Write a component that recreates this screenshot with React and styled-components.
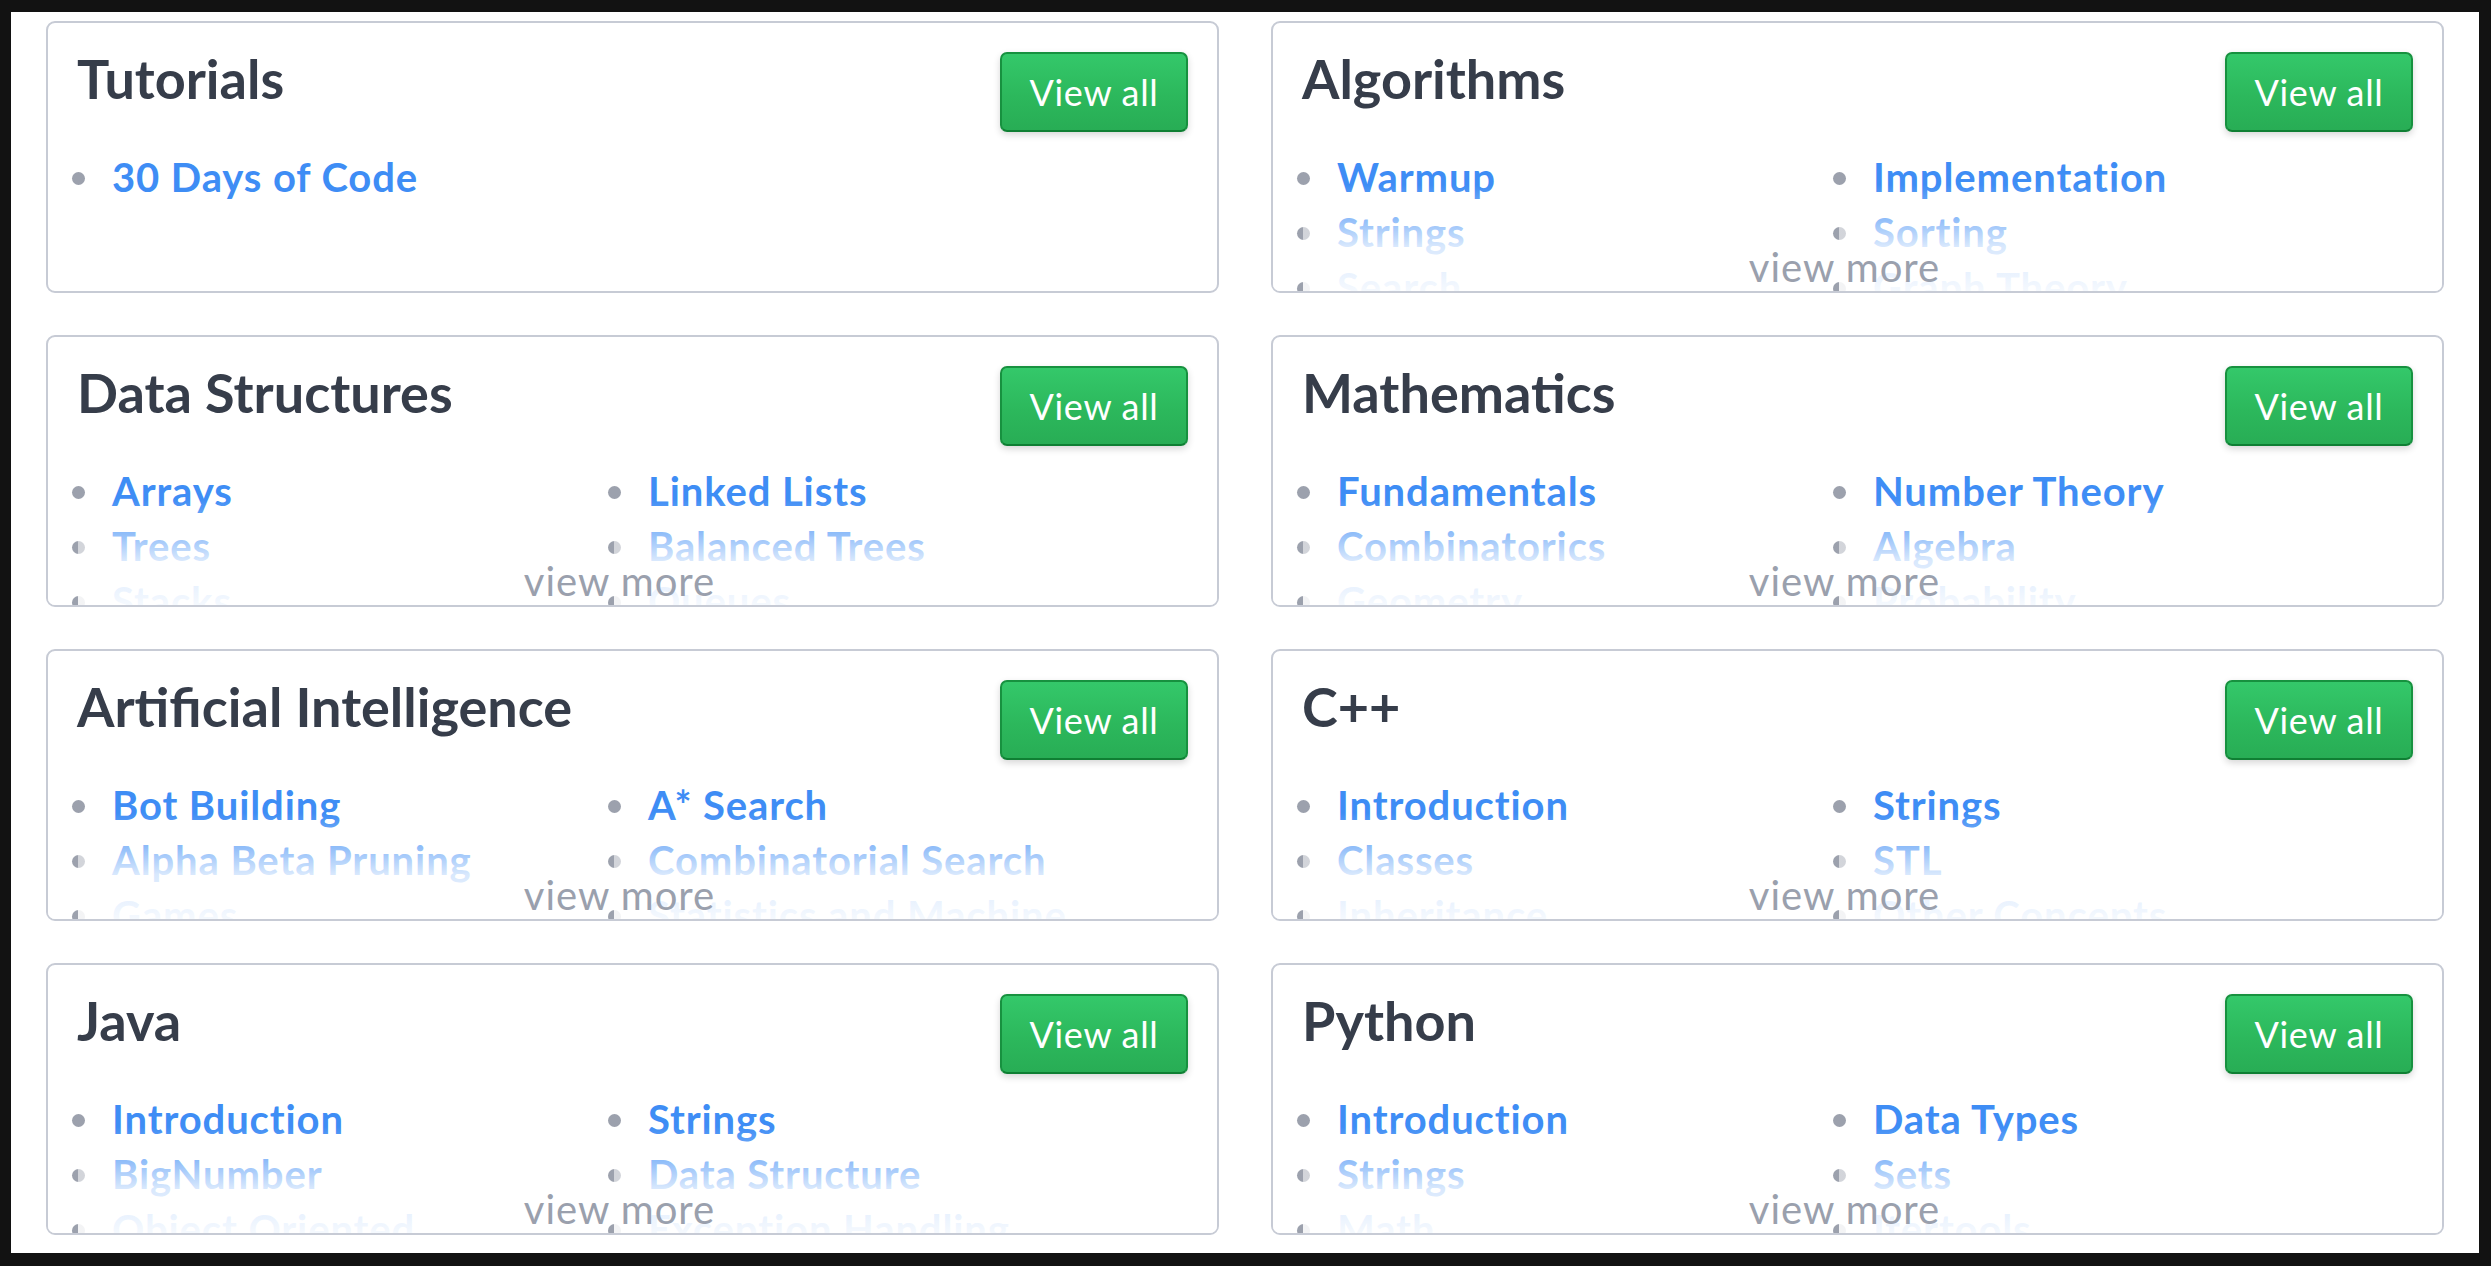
import React from "react";
import styled, { createGlobalStyle } from "styled-components";

const Global = createGlobalStyle`
  html, body { margin: 0; padding: 0; background: #121212; }
  * { box-sizing: border-box; }
  body { font-family: Lato, "Open Sans", "Liberation Sans", sans-serif; }
`;

const Frame = styled.div`
  margin: 12px 12px 13px 11px;
  height: 1241px;
  background: #ffffff;
  overflow: hidden;
`;

const Grid = styled.div`
  display: grid;
  grid-template-columns: 1fr 1fr;
  column-gap: 52px;
  row-gap: 42px;
  padding: 9px 35px 0 35px;
`;

const Card = styled.section`
  position: relative;
  height: 272px;
  border: 2px solid #c7cbd5;
  border-radius: 9px;
  padding: 29px 29px 0 29px;
  overflow: hidden;
  background: #fff;
`;

const Header = styled.div`
  display: flex;
  justify-content: space-between;
  align-items: flex-start;
`;

const Title = styled.h2`
  margin: 0;
  font-size: 54px;
  line-height: 54px;
  font-weight: 700;
  color: #363d4a;
`;

const ViewAll = styled.button`
  width: 188px;
  height: 80px;
  border: 2px solid #17913f;
  border-bottom-color: #0f7f33;
  border-radius: 7px;
  background: linear-gradient(180deg, #34c86a 0%, #2cb85c 55%, #28ad55 100%);
  box-shadow: 0 3px 7px rgba(0, 0, 0, 0.16);
  color: #ffffff;
  font-family: Lato, "Open Sans", sans-serif;
  font-size: 36px;
  font-weight: 400;
  letter-spacing: 0.7px;
  padding: 0;
  cursor: pointer;
`;

const List = styled.ul`
  list-style: none;
  margin: 18px 0 0 -5px;
  padding: 0;
  display: grid;
  grid-template-columns: 536px 1fr;
  align-items: start;
`;

const fadeRight = ["#9ca1ad", "rgba(156, 161, 173, 0.45)", "rgba(156, 161, 173, 0.12)", "rgba(156, 161, 173, 0)"];

const Item = styled.li`
  display: flex;
  align-items: flex-start;
  gap: 27px;
  &::before {
    content: "";
    position: relative;
    z-index: 1;
    flex: none;
    width: 13px;
    height: 13px;
    margin-top: 22px;
    border-radius: 50%;
    background: ${(p) =>
      p.$row === 0
        ? "#9ca1ad"
        : `linear-gradient(90deg, #9ca1ad 50%, ${fadeRight[Math.min(p.$row, 3)]} 50%)`};
  }
`;

const Link = styled.a`
  font-size: 40px;
  line-height: 55px;
  font-weight: 700;
  color: #3e8df5;
  text-decoration: none;
  letter-spacing: 0.9px;
`;

const Fade = styled.div`
  position: absolute;
  left: 0;
  right: 0;
  bottom: 0;
  height: 106px;
  background: linear-gradient(
    180deg,
    rgba(255, 255, 255, 0) 0%,
    rgba(255, 255, 255, 0.42) 32%,
    rgba(255, 255, 255, 0.8) 58%,
    rgba(255, 255, 255, 0.95) 100%
  );
  pointer-events: none;
`;

const More = styled.a`
  position: absolute;
  z-index: 2;
  left: 0;
  right: 26px;
  bottom: 0;
  text-align: center;
  font-size: 40px;
  line-height: 48px;
  font-weight: 400;
  letter-spacing: 1px;
  color: #9aa0ad;
  text-decoration: none;
`;

const tracks = [
  { title: "Tutorials", items: ["30 Days of Code"] },
  {
    title: "Algorithms",
    items: ["Warmup", "Implementation", "Strings", "Sorting", "Search", "Graph Theory", "Greedy", "Dynamic Programming"],
  },
  {
    title: "Data Structures",
    items: ["Arrays", "Linked Lists", "Trees", "Balanced Trees", "Stacks", "Queues", "Heap", "Disjoint Set"],
  },
  {
    title: "Mathematics",
    items: ["Fundamentals", "Number Theory", "Combinatorics", "Algebra", "Geometry", "Probability"],
  },
  {
    title: "Artificial Intelligence",
    items: ["Bot Building", "A* Search", "Alpha Beta Pruning", "Combinatorial Search", "Games", "Statistics and Machine Learning"],
  },
  {
    title: "C++",
    items: ["Introduction", "Strings", "Classes", "STL", "Inheritance", "Other Concepts"],
  },
  {
    title: "Java",
    items: ["Introduction", "Strings", "BigNumber", "Data Structure", "Object Oriented Programming", "Exception Handling"],
  },
  {
    title: "Python",
    items: ["Introduction", "Data Types", "Strings", "Sets", "Math", "Itertools"],
  },
];

function TrackCard({ title, items }) {
  const many = items.length > 2;
  return (
    <Card>
      <Header>
        <Title>{title}</Title>
        <ViewAll>View all</ViewAll>
      </Header>
      <List>
        {items.map((it, i) => (
          <Item key={i} $row={Math.floor(i / 2)}>
            <Link href="#">{it}</Link>
          </Item>
        ))}
      </List>
      {many && <Fade />}
      {many && <More href="#">view more</More>}
    </Card>
  );
}

export default function App() {
  return (
    <>
      <Global />
      <Frame>
        <Grid>
          {tracks.map((t) => (
            <TrackCard key={t.title} {...t} />
          ))}
        </Grid>
      </Frame>
    </>
  );
}
